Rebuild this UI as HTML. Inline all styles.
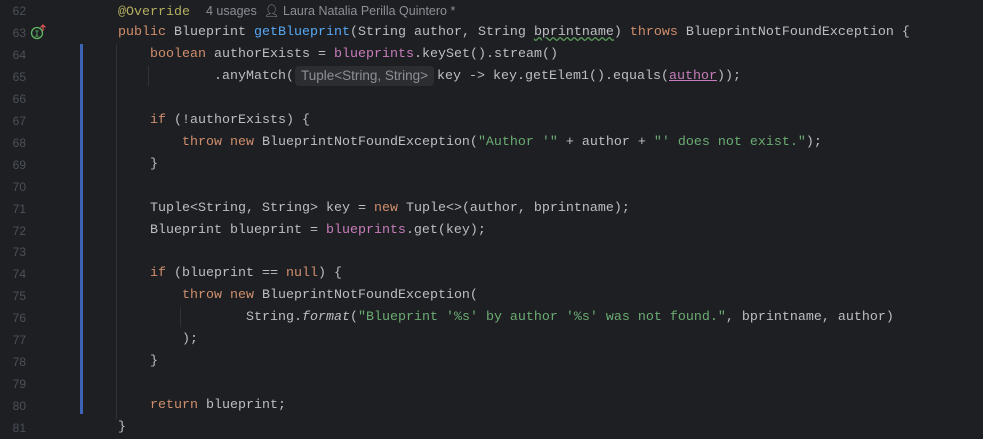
<!DOCTYPE html>
<html><head><style>
body{margin:0;background:#1e1f22;width:983px;height:439px;overflow:hidden;position:relative;font-family:"Liberation Mono",monospace;font-size:13.33px;color:#bcbec4}
.ln{position:absolute;left:0;width:26px;text-align:right;color:#4b5059;font-size:12px;font-family:"Liberation Sans",sans-serif}
.c{position:absolute;left:118px;white-space:pre;line-height:22px}
.k{color:#cf8e6d}.m{color:#56a8f5}.f{color:#c77dbb}.s{color:#6aab73}.a{color:#b3ae60}
.hint{font-family:"Liberation Sans",sans-serif;font-size:12.5px;color:#8c8f96}
.inl{display:inline-block;background:#2b2d30;color:#8c8f96;font-family:"Liberation Sans",sans-serif;font-size:13.5px;border-radius:4px;padding:0 6px;height:20px;line-height:20px;margin:0 3px 0 1px;vertical-align:-1px}
</style></head><body>
<div style="position:absolute;left:80px;top:44px;width:3px;height:370px;background:#3d63b5"></div>
<div style="position:absolute;left:116px;top:44px;width:1px;height:375px;background:#2f3136"></div>
<div style="position:absolute;left:148px;top:66px;width:1px;height:20px;background:#2f3136"></div>
<div style="position:absolute;left:180px;top:307px;width:1px;height:20px;background:#2f3136"></div>
<svg style="position:absolute;left:30px;top:24px" width="20" height="18"><circle cx="7" cy="9" r="5.5" fill="none" stroke="#5fb865" stroke-width="1.3"/><text x="7" y="12.5" fill="#5fb865" font-size="9" text-anchor="middle" font-family="Liberation Mono">I</text><path d="M13 7V1M10.5 3.5L13 1L15.5 3.5" stroke="#e05555" stroke-width="1.2" fill="none"/></svg>
<div id="g"></div>
<script>
var lines=[
'<span class="a">@Override</span>  <span class="hint">4 usages  &#x1F464;&#xFE0E; Laura Natalia Perilla Quintero *</span>',
'<span class="k">public</span> Blueprint <span class="m">getBlueprint</span>(String author, String <span style="text-decoration:underline wavy #5a9a5a">bprintname</span>) <span class="k">throws</span> BlueprintNotFoundException {',
'    <span class="k">boolean</span> authorExists = <span class="f">blueprints</span>.keySet().stream()',
'            .anyMatch(<span class="inl">Tuple&lt;String, String&gt;</span>key -&gt; key.getElem1().equals(<span class="f" style="text-decoration:underline">author</span>));',
'',
'    <span class="k">if</span> (!authorExists) {',
'        <span class="k">throw new</span> BlueprintNotFoundException(<span class="s">"Author \'"</span> + author + <span class="s">"\' does not exist."</span>);',
'    }',
'',
'    Tuple&lt;String, String&gt; key = <span class="k">new</span> Tuple&lt;&gt;(author, bprintname);',
'    Blueprint blueprint = <span class="f">blueprints</span>.get(key);',
'',
'    <span class="k">if</span> (blueprint == <span class="k">null</span>) {',
'        <span class="k">throw new</span> BlueprintNotFoundException(',
'                String.<i>format</i>(<span class="s">"Blueprint \'%s\' by author \'%s\' was not found."</span>, bprintname, author)',
'        );',
'    }',
'',
'    <span class="k">return</span> blueprint;',
'}'];
var h='';for(var i=0;i<lines.length;i++){var t=i*21.95;h+='<div class="ln" style="top:'+(t+4)+'px">'+(62+i)+'</div><div class="c" style="top:'+t+'px">'+lines[i]+'</div>';}
document.getElementById('g').innerHTML=h;
</script>
</body></html>
